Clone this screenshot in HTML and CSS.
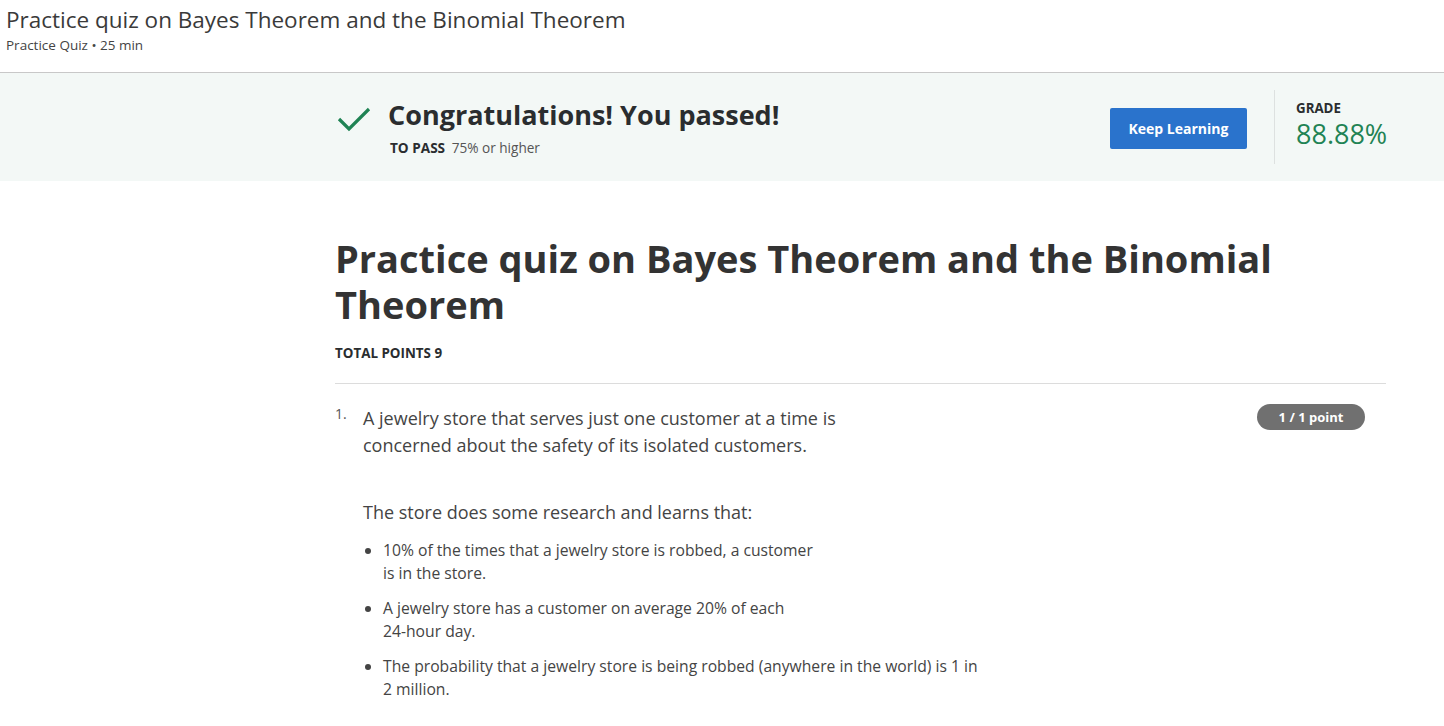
FILE: index.html
```html
<!DOCTYPE html>
<html lang="en">
<head>
<meta charset="utf-8">
<title>Practice quiz on Bayes Theorem and the Binomial Theorem</title>
<link rel="stylesheet" href="styles.css">
</head>
<body>
<header class="top">
  <h1 class="top-title">Practice quiz on Bayes Theorem and the Binomial Theorem</h1>
  <div class="top-sub">Practice Quiz • 25 min</div>
</header>
<section class="band">
  <div class="band-inner">
    <div class="pass">
      <svg class="check" width="34" height="26" viewBox="0 0 34 26" aria-hidden="true">
        <path d="M2 13 L12 23 L32 3" fill="none" stroke="#1f8354" stroke-width="3.2"/>
      </svg>
      <div class="pass-text">
        <div class="pass-title">Congratulations! You passed!</div>
        <div class="pass-req"><b>TO PASS</b> 75% or higher</div>
      </div>
    </div>
    <button class="btn">Keep Learning</button>
    <div class="grade">
      <div class="grade-label">GRADE</div>
      <div class="grade-value">88.88%</div>
    </div>
  </div>
</section>
<main class="content">
  <h2 class="quiz-title">Practice quiz on Bayes Theorem and the Binomial Theorem</h2>
  <div class="total">TOTAL POINTS 9</div>
  <div class="question">
    <div class="qnum">1.</div>
    <div class="qbody">
      <p class="qtext">A jewelry store that serves just one customer at a time is<br>concerned about the safety of its isolated customers.</p>
      <p class="qtext qpara">The store does some research and learns that:</p>
      <ul class="facts">
        <li>10% of the times that a jewelry store is robbed, a customer<br>is in the store.</li>
        <li>A jewelry store has a customer on average 20% of each<br>24-hour day.</li>
        <li>The probability that a jewelry store is being robbed (anywhere in the world) is 1 in<br>2 million.</li>
      </ul>
    </div>
    <div class="badge">1 / 1 point</div>
  </div>
</main>
</body>
</html>
```
FILE: styles.css
```css
* { box-sizing: border-box; }
html, body { margin: 0; padding: 0; }
body {
  font-family: "Open Sans", "Noto Sans", sans-serif;
  color: #373a3c;
  background: #fff;
  overflow: hidden;
}
.top {
  padding: 5px 6px 0;
  height: 73px;
  border-bottom: 1px solid #c8c8c8;
}
.top-title {
  margin: 0;
  font-size: 22.5px;
  font-weight: 400;
  line-height: 30px;
  color: #3a3a3a;
}
.top-sub {
  font-size: 13.5px;
  line-height: 20px;
  color: #444;
}
.band {
  background: #f3f8f6;
  height: 108px;
}
.band-inner {
  display: flex;
  align-items: center;
  margin-left: 335px;
  width: 1051px;
  height: 108px;
}
.pass {
  display: flex;
  align-items: flex-start;
  flex: 1;
  margin-top: -12px;
}
.check { margin: 21px 0 0 2px; }
.pass-text { margin-left: 17px; margin-top: 10px; }
.pass-title {
  font-size: 27px;
  font-weight: 700;
  line-height: 40px;
  color: #2a2d2f;
}
.pass-req {
  font-size: 13.6px;
  line-height: 20px;
  margin-top: 3px;
  margin-left: 2px;
  color: #555;
}
.pass-req b { color: #2a2d2f; margin-right: 3px; }
.btn {
  font-family: inherit;
  background: #2a73cc;
  color: #fff;
  border: 0;
  border-radius: 2px;
  width: 137px;
  height: 41px;
  font-size: 14px;
  font-weight: 700;
  margin-top: 2px;
}
.grade {
  margin-left: 27px;
  border-left: 1px solid #dde1e0;
  height: 74px;
  padding-left: 21px;
  width: 112px;
  padding-top: 9px;
}
.grade-label {
  font-size: 13.3px;
  font-weight: 700;
  line-height: 18px;
  color: #2a2d2f;
}
.grade-value {
  font-size: 27px;
  line-height: 33px;
  color: #1f8354;
}
.content {
  margin-left: 335px;
  width: 1051px;
  padding-top: 54px;
}
.quiz-title {
  margin: 0;
  font-size: 38px;
  font-weight: 700;
  line-height: 46px;
  color: #333;
  width: 990px;
}
.total {
  font-size: 13.4px;
  font-weight: 700;
  line-height: 18px;
  margin-top: 17px;
  color: #2a2d2f;
}
.question {
  margin-top: 21px;
  border-top: 1px solid #dcdcdc;
  padding-top: 21px;
  display: flex;
  align-items: flex-start;
}
.qnum {
  width: 28px;
  font-size: 14px;
  line-height: 27px;
  margin-top: -5px;
  color: #555;
}
.qbody { flex: 1; }
.qtext {
  margin: 0;
  font-size: 18px;
  line-height: 27px;
  color: #444;
}
.qpara { margin-top: 40px; }
.facts {
  margin: 13px 0 0;
  padding-left: 20px;
  font-size: 15.7px;
  line-height: 23px;
  color: #444;
}
.facts li { margin-bottom: 12px; }
.badge {
  background: #707070;
  color: #fff;
  font-size: 13px;
  font-weight: 700;
  line-height: 26px;
  height: 26px;
  width: 108px;
  text-align: center;
  border-radius: 13px;
  margin-right: 21px;
  margin-top: -1px;
}
```
